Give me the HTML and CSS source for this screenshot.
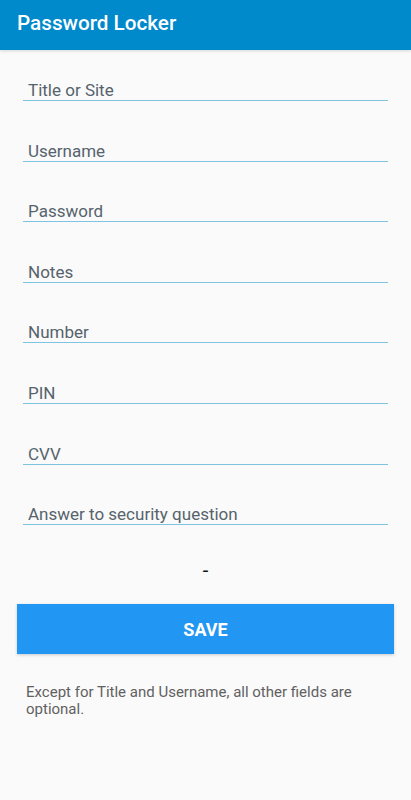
FILE: index.html
```html
<!DOCTYPE html>
<html lang="en">
<head>
  <meta charset="UTF-8">
  <meta name="viewport" content="width=device-width, initial-scale=1.0">
  <title>Password Locker</title>
  <link rel="stylesheet" href="styles.css">
</head>
<body>
  <header class="app-bar">Password Locker</header>

  <form class="form">
    <div class="field"><input type="text" placeholder="Title or Site"></div>
    <div class="field"><input type="text" placeholder="Username"></div>
    <div class="field"><input type="password" placeholder="Password"></div>
    <div class="field"><input type="text" placeholder="Notes"></div>
    <div class="field"><input type="text" placeholder="Number"></div>
    <div class="field"><input type="text" placeholder="PIN"></div>
    <div class="field"><input type="text" placeholder="CVV"></div>
    <div class="field"><input type="text" placeholder="Answer to security question"></div>

    <div class="dash">-</div>

    <button type="button" class="save">SAVE</button>

    <p class="hint">Except for Title and Username, all other fields are optional.</p>
  </form>
</body>
</html>
```

FILE: styles.css
```css
body {
  margin: 0;
  background: #fafafa;
  font-family: Roboto, "Noto Sans", sans-serif;
  height: 800px;
}

.app-bar {
  background: #0089cb;
  color: white;
  font-size: 20.7px;
  font-weight: 500;
  height: 50px;
  line-height: 46px;
  padding-left: 17px;
  box-shadow: 0 1px 3px rgba(0, 0, 0, 0.15);
}

.form {
  display: flex;
  flex-direction: column;
  padding: 0 17px;
}

.field {
  padding: 0 6px;
  margin-top: 34.6px;
}
.field:first-child {
  margin-top: 25px;
}

.field input {
  display: block;
  box-sizing: border-box;
  width: 100%;
  height: 26px;
  border: 0;
  border-bottom: 1px solid #7ec3e0;
  background: transparent;
  padding: 5px 0 0 5px;
  font-family: inherit;
  font-size: 17px;
  color: #333;
  outline: none;
}
.field input::placeholder {
  color: #56636c;
  opacity: 1;
}

.dash {
  text-align: center;
  font-size: 20px;
  color: #111;
  margin-top: 33px;
  line-height: 24px;
}

.save {
  margin-top: 22px;
  height: 50px;
  border: 0;
  background: #2196f3;
  color: white;
  font-family: inherit;
  font-size: 18px;
  font-weight: 700;
  box-shadow: 0 1px 3px rgba(0, 0, 0, 0.2);
}

.hint {
  margin: 30px 0 0;
  padding: 0 9px;
  font-size: 15px;
  line-height: 16.5px;
  color: #616161;
}
```
